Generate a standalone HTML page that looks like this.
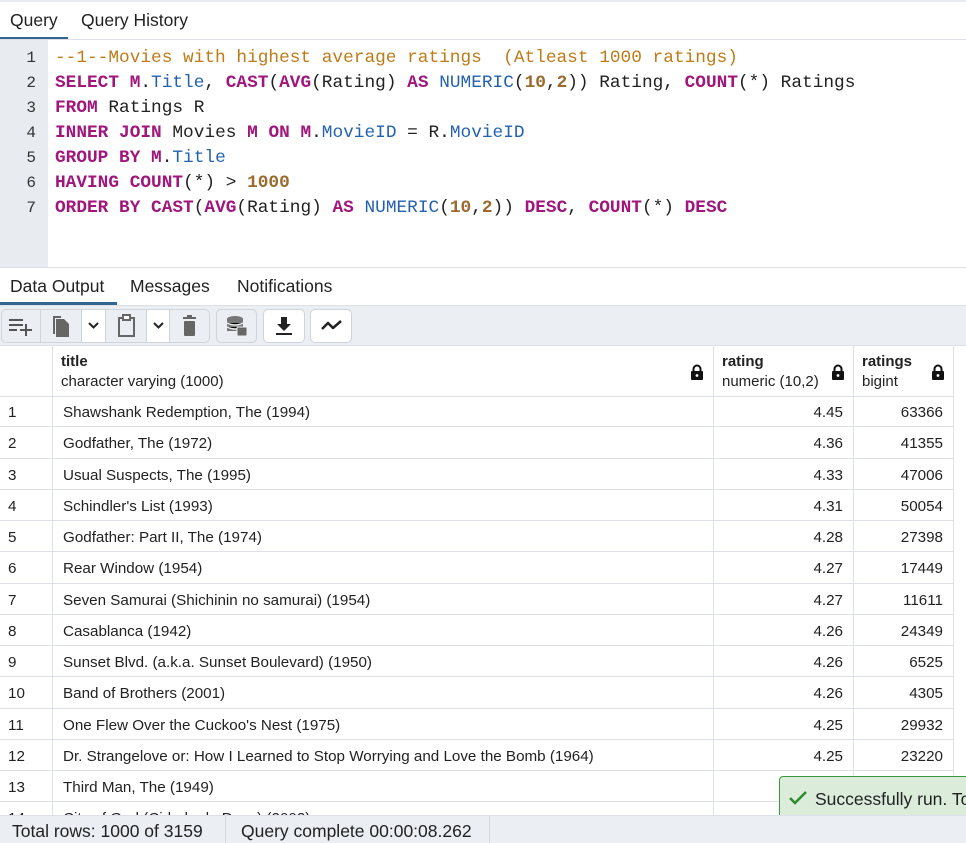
<!DOCTYPE html>
<html><head><meta charset="utf-8"><style>
*{box-sizing:border-box;margin:0;padding:0}
body{width:966px;height:843px;overflow:hidden;background:#fff;font-family:"Liberation Sans",sans-serif;color:#222;position:relative}
.abs{position:absolute}
.tab{position:absolute;font-size:17.5px;color:#222}
.code{position:absolute;left:55px;font-family:"Liberation Mono",monospace;font-size:17.8px;white-space:pre;color:#222}
.ln{position:absolute;left:0;width:36px;text-align:right;font-family:"Liberation Mono",monospace;font-size:16px;color:#333}
.k{color:#a0167c;font-weight:bold}
.i{color:#2462b0}
.c{color:#c07a17}
.n{color:#9a6a2e;font-weight:bold}
.row{position:absolute;left:0;width:953px;height:31.25px;border-bottom:1px solid #dde0e6;font-size:15.2px;line-height:33px}
.row div{position:absolute;top:0;height:31px}
.btn{position:absolute;top:309px;height:34px;background:#fff;border:1px solid #cfd4db;border-radius:5px}
.gb{background:#ebeef2}
</style></head><body>
<div class="abs" style="left:0;top:0;width:966px;height:2px;background:#e8ecf0"></div>
<div class="tab" style="left:10px;top:10px">Query</div>
<div class="tab" style="left:81px;top:10px">Query History</div>
<div class="abs" style="left:0;top:37px;width:68px;height:3px;background:#326690"></div>
<div class="abs" style="left:0;top:39px;width:966px;height:1px;background:#dde0e6"></div>
<div class="abs" style="left:0;top:40px;width:48px;height:227px;background:#e8ecf0"></div>
<div class="ln" style="top:49px">1</div><div class="ln" style="top:74px">2</div><div class="ln" style="top:99px">3</div><div class="ln" style="top:124px">4</div><div class="ln" style="top:149px">5</div><div class="ln" style="top:174px">6</div><div class="ln" style="top:199px">7</div>
<div class="code" style="top:48px"><span class="c">--1--Movies with highest average ratings  (Atleast 1000 ratings)</span></div>
<div class="code" style="top:73px"><span class="k">SELECT</span> <span class="k">M</span>.<span class="i">Title</span>, <span class="k">CAST</span>(<span class="k">AVG</span>(Rating) <span class="k">AS</span> <span class="i">NUMERIC</span>(<span class="n">10</span>,<span class="n">2</span>)) Rating, <span class="k">COUNT</span>(*) Ratings</div>
<div class="code" style="top:98px"><span class="k">FROM</span> Ratings R</div>
<div class="code" style="top:123px"><span class="k">INNER</span> <span class="k">JOIN</span> Movies <span class="k">M</span> <span class="k">ON</span> <span class="k">M</span>.<span class="i">MovieID</span> = R.<span class="i">MovieID</span></div>
<div class="code" style="top:148px"><span class="k">GROUP</span> <span class="k">BY</span> <span class="k">M</span>.<span class="i">Title</span></div>
<div class="code" style="top:173px"><span class="k">HAVING</span> <span class="k">COUNT</span>(*) &gt; <span class="n">1000</span></div>
<div class="code" style="top:198px"><span class="k">ORDER</span> <span class="k">BY</span> <span class="k">CAST</span>(<span class="k">AVG</span>(Rating) <span class="k">AS</span> <span class="i">NUMERIC</span>(<span class="n">10</span>,<span class="n">2</span>)) <span class="k">DESC</span>, <span class="k">COUNT</span>(*) <span class="k">DESC</span></div>
<div class="abs" style="left:0;top:267px;width:966px;height:1px;background:#dde0e6"></div>
<div class="tab" style="left:10px;top:276px">Data Output</div>
<div class="tab" style="left:130px;top:276px">Messages</div>
<div class="tab" style="left:237px;top:276px">Notifications</div>
<div class="abs gb" style="left:0;top:305px;width:966px;height:41px;border-top:1px solid #dde0e6;border-bottom:1px solid #dde0e6"></div>
<div class="abs" style="left:0;top:302px;width:117px;height:3px;background:#326690"></div>
<div class="btn" style="left:1px;width:209px;background:#ebeef2"></div>
<div class="abs" style="left:40px;top:310px;width:1px;height:32px;background:#cfd4db"></div>
<div class="abs" style="left:81px;top:310px;width:25px;height:32px;background:#fff;border-left:1px solid #cfd4db;border-right:1px solid #cfd4db"></div>
<div class="abs" style="left:146px;top:310px;width:24px;height:32px;background:#fff;border-left:1px solid #cfd4db;border-right:1px solid #cfd4db"></div>
<svg class="abs" style="left:8px;top:316px" width="26" height="20" viewBox="0 0 26 20"><g stroke="#555" stroke-width="2"><line x1="1" y1="4" x2="15" y2="4"/><line x1="1" y1="9" x2="15" y2="9"/><line x1="1" y1="14" x2="9" y2="14"/><line x1="12" y1="14" x2="24" y2="14"/><line x1="18" y1="8" x2="18" y2="20"/></g></svg>
<svg class="abs" style="left:51px;top:314px" width="20" height="24" viewBox="0 0 20 24"><path d="M2 2h8v2H4v16H2z" fill="#666"/><path d="M5 5h8l5 5v13H5z" fill="#666"/></svg>
<svg class="abs" style="left:87px;top:321px" width="13" height="9"><path d="M2 2l4.5 4.5L11 2" stroke="#222" stroke-width="2" fill="none"/></svg>
<svg class="abs" style="left:117px;top:314px" width="20" height="24"><rect x="2" y="4" width="15" height="18" fill="none" stroke="#666" stroke-width="2"/><rect x="6" y="1" width="7" height="5" fill="#fff" stroke="#666" stroke-width="2"/></svg>
<svg class="abs" style="left:152px;top:321px" width="13" height="9"><path d="M2 2l4.5 4.5L11 2" stroke="#222" stroke-width="2" fill="none"/></svg>
<svg class="abs" style="left:182px;top:315px" width="16" height="22"><rect x="1" y="2" width="13" height="2" fill="#666"/><rect x="5" y="0" width="5" height="3" fill="#666"/><rect x="2" y="6" width="11" height="15" rx="1" fill="#666"/></svg>
<div class="btn" style="left:216px;width:41px;background:#ebeef2"></div>
<svg class="abs" style="left:226px;top:315px" width="22" height="22"><ellipse cx="9" cy="4" rx="8" ry="3" fill="#777"/><rect x="1" y="4" width="16" height="12" fill="#777"/><g stroke="#ebeef2" stroke-width="1.5"><path d="M1 8q8 4 16 0M1 12q8 4 16 0"/></g><rect x="11" y="12" width="10" height="9" rx="1" fill="#666" stroke="#ebeef2"/></svg>
<div class="btn" style="left:263px;width:42px"></div>
<svg class="abs" style="left:275px;top:316px" width="18" height="20"><path d="M6 1h6v7h4l-7 7-7-7h4z" fill="#222"/><rect x="1" y="17" width="16" height="2" fill="#222"/></svg>
<div class="btn" style="left:310px;width:42px"></div>
<svg class="abs" style="left:320px;top:318px" width="24" height="14"><path d="M2 11l6-6 5 5 8-7" stroke="#222" stroke-width="2.5" fill="none" stroke-linejoin="round"/></svg>
<div class="abs" style="left:0;top:346px;width:953px;height:51px;border-bottom:1px solid #dde0e6"></div>
<div class="abs" style="left:52px;top:346px;width:1px;height:470px;background:#dde0e6"></div>
<div class="abs" style="left:713px;top:346px;width:1px;height:470px;background:#dde0e6"></div>
<div class="abs" style="left:853px;top:346px;width:1px;height:470px;background:#dde0e6"></div>
<div class="abs" style="left:953px;top:346px;width:1px;height:470px;background:#dde0e6"></div>
<div class="abs" style="left:61px;top:353px;font-size:15px;font-weight:bold">title</div>
<div class="abs" style="left:61px;top:373px;font-size:15px">character varying (1000)</div>
<div class="abs" style="left:722px;top:353px;font-size:15px;font-weight:bold">rating</div>
<div class="abs" style="left:722px;top:373px;font-size:15px">numeric (10,2)</div>
<div class="abs" style="left:862px;top:353px;font-size:15px;font-weight:bold">ratings</div>
<div class="abs" style="left:862px;top:373px;font-size:15px">bigint</div>
<svg class="abs" style="left:690px;top:364px" width="14" height="17"><path d="M3.5 7V5a3.5 3.5 0 0 1 7 0v2" stroke="#111" stroke-width="2" fill="none"/><rect x="1" y="7" width="12" height="9" rx="1" fill="#111"/><circle cx="7" cy="11.5" r="1.4" fill="#fff"/></svg>
<svg class="abs" style="left:831px;top:364px" width="14" height="17"><path d="M3.5 7V5a3.5 3.5 0 0 1 7 0v2" stroke="#111" stroke-width="2" fill="none"/><rect x="1" y="7" width="12" height="9" rx="1" fill="#111"/><circle cx="7" cy="11.5" r="1.4" fill="#fff"/></svg>
<svg class="abs" style="left:931px;top:364px" width="14" height="17"><path d="M3.5 7V5a3.5 3.5 0 0 1 7 0v2" stroke="#111" stroke-width="2" fill="none"/><rect x="1" y="7" width="12" height="9" rx="1" fill="#111"/><circle cx="7" cy="11.5" r="1.4" fill="#fff"/></svg>
<div class="row" style="top:396px"><div style="left:8px">1</div><div style="left:63px">Shawshank Redemption, The (1994)</div><div style="right:110px">4.45</div><div style="right:10px">63366</div></div>
<div class="row" style="top:427.25px"><div style="left:8px">2</div><div style="left:63px">Godfather, The (1972)</div><div style="right:110px">4.36</div><div style="right:10px">41355</div></div>
<div class="row" style="top:458.5px"><div style="left:8px">3</div><div style="left:63px">Usual Suspects, The (1995)</div><div style="right:110px">4.33</div><div style="right:10px">47006</div></div>
<div class="row" style="top:489.75px"><div style="left:8px">4</div><div style="left:63px">Schindler's List (1993)</div><div style="right:110px">4.31</div><div style="right:10px">50054</div></div>
<div class="row" style="top:521px"><div style="left:8px">5</div><div style="left:63px">Godfather: Part II, The (1974)</div><div style="right:110px">4.28</div><div style="right:10px">27398</div></div>
<div class="row" style="top:552.25px"><div style="left:8px">6</div><div style="left:63px">Rear Window (1954)</div><div style="right:110px">4.27</div><div style="right:10px">17449</div></div>
<div class="row" style="top:583.5px"><div style="left:8px">7</div><div style="left:63px">Seven Samurai (Shichinin no samurai) (1954)</div><div style="right:110px">4.27</div><div style="right:10px">11611</div></div>
<div class="row" style="top:614.75px"><div style="left:8px">8</div><div style="left:63px">Casablanca (1942)</div><div style="right:110px">4.26</div><div style="right:10px">24349</div></div>
<div class="row" style="top:646px"><div style="left:8px">9</div><div style="left:63px">Sunset Blvd. (a.k.a. Sunset Boulevard) (1950)</div><div style="right:110px">4.26</div><div style="right:10px">6525</div></div>
<div class="row" style="top:677.25px"><div style="left:8px">10</div><div style="left:63px">Band of Brothers (2001)</div><div style="right:110px">4.26</div><div style="right:10px">4305</div></div>
<div class="row" style="top:708.5px"><div style="left:8px">11</div><div style="left:63px">One Flew Over the Cuckoo's Nest (1975)</div><div style="right:110px">4.25</div><div style="right:10px">29932</div></div>
<div class="row" style="top:739.75px"><div style="left:8px">12</div><div style="left:63px">Dr. Strangelove or: How I Learned to Stop Worrying and Love the Bomb (1964)</div><div style="right:110px">4.25</div><div style="right:10px">23220</div></div>
<div class="row" style="top:771px"><div style="left:8px">13</div><div style="left:63px">Third Man, The (1949)</div></div>
<div class="row" style="top:802.25px"><div style="left:8px">14</div><div style="left:63px">City of God (Cidade de Deus) (2002)</div></div>
<div class="abs" style="left:779px;top:776px;width:200px;height:45px;background:#dbecdb;border:1px solid #3a9a3a;border-radius:4px"></div>
<svg class="abs" style="left:788px;top:790px" width="20" height="16"><path d="M2 8l5 5 11-11" stroke="#2e8b2e" stroke-width="2.5" fill="none"/></svg>
<div class="abs" style="left:815px;top:789px;font-size:17.5px;color:#222;white-space:nowrap">Successfully run. To</div>
<div class="abs gb" style="left:0;top:815px;width:966px;height:28px;border-top:1px solid #dde0e6"></div>
<div class="abs" style="left:225px;top:816px;width:1px;height:27px;background:#d5d9df"></div>
<div class="abs" style="left:489px;top:816px;width:1px;height:27px;background:#d5d9df"></div>
<div class="abs" style="left:12px;top:821px;font-size:17.5px">Total rows: 1000 of 3159</div>
<div class="abs" style="left:241px;top:821px;font-size:17.5px">Query complete 00:00:08.262</div>
</body></html>
